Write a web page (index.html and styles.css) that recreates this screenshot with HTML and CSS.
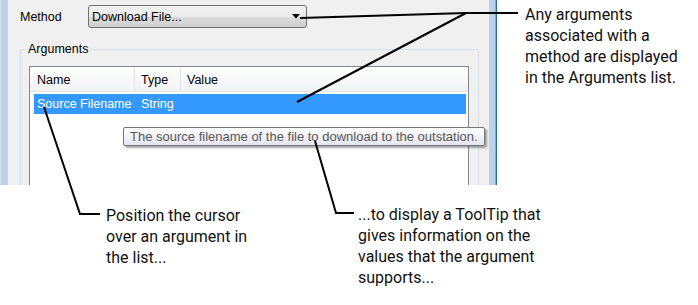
FILE: index.html
```html
<!DOCTYPE html>
<html>
<head>
<meta charset="utf-8">
<link rel="stylesheet" href="styles.css">
</head>
<body>
<div class="page">
  <div class="dialog">
    <div class="frame-l"></div>
    <div class="client">
      <div class="method-row">
        <span class="label">Method</span>
        <div class="combo">
          <span>Download File...</span>
          <svg class="arrow" width="8" height="5" viewBox="0 0 8 5"><path d="M0 0H8L4 4.5Z" fill="#000"/></svg>
        </div>
      </div>
      <fieldset class="group">
        <legend>Arguments</legend>
        <div class="list">
          <div class="list-head">
            <div class="hcell">Name</div>
            <div class="hcell">Type</div>
            <div class="hcell last">Value</div>
          </div>
          <div class="row selected">
            <div class="cell first">Source Filename</div>
            <div class="cell">String</div>
            <div class="cell"></div>
          </div>
        </div>
      </fieldset>
    </div>
    <div class="frame-r"></div>
  </div>

  <div class="tooltip">The source filename of the file to download to the outstation.</div>

  <svg class="leaders" width="698" height="305" viewBox="0 0 698 305">
    <g fill="none" stroke="#000" stroke-width="2" stroke-linejoin="miter">
      <polyline points="300,18 466,13 518,13"/>
      <line x1="466" y1="13" x2="297" y2="102"/>
      <polyline points="44,107 80,214 100,214"/>
      <polyline points="315,141 336,213 354,213"/>
    </g>
  </svg>

  <p class="note note-a">Any arguments<br>associated with a<br>method are displayed<br>in the Arguments list.</p>
  <p class="note note-b">Position the cursor<br>over an argument in<br>the list...</p>
  <p class="note note-c">...to display a ToolTip that<br>gives information on the<br>values that the argument<br>supports...</p>
</div>
</body>
</html>
```

FILE: styles.css
```css
html, body {
  margin: 0;
  padding: 0;
  background: #fff;
}

.page {
  position: relative;
  width: 698px;
  height: 305px;
  overflow: hidden;
  font-family: "Liberation Sans", Arial, sans-serif;
}

.dialog {
  display: flex;
  width: 497px;
  height: 185px;
  overflow: hidden;
}

.frame-l {
  width: 8px;
  background: #bad2eb;
  border-left: 1px solid #d6e2ee;
  box-sizing: border-box;
}

.frame-r {
  width: 8px;
  background: #bad2eb;
  box-sizing: border-box;
  border-right: 1px solid #1f6f9a;
  box-shadow: inset -1px 0 0 #4cc4f0;
}

.client {
  flex: 1;
  background: #f0f0f0;
  padding: 5px 10px 0 12px;
  font-size: 12.5px;
  color: #000;
}

.method-row {
  display: flex;
  align-items: center;
  height: 23px;
}

.label {
  width: 68px;
}

.combo {
  width: 219px;
  height: 23px;
  box-sizing: border-box;
  border: 1px solid #707070;
  border-radius: 3px;
  background: linear-gradient(#f2f2f2 0%, #ebebeb 50%, #dddddd 51%, #cfcfcf 100%);
  display: flex;
  align-items: center;
  justify-content: space-between;
  padding: 0 6px 0 3px;
}

.arrow {
  display: block;
}

.group {
  margin: 14px 0 0 0;
  padding: 9px 9px 0 8px;
  border: 1px solid #d5dfe5;
  border-radius: 3px;
  min-width: 0;
  height: 200px;
}

.group legend {
  padding: 0 2px;
  margin-left: -3px;
  font-size: 12.5px;
  line-height: 15px;
}

.list {
  border: 1px solid #828790;
  background: #fff;
  height: 200px;
}

.list-head {
  display: grid;
  grid-template-columns: 105px 46px 1fr;
  height: 24px;
  background: linear-gradient(#ffffff, #f1f2f4);
  border-bottom: 1px solid #e5e5e5;
}

.hcell {
  display: flex;
  align-items: center;
  padding-left: 7px;
  padding-top: 2px;
  border-right: 1px solid #e3e3e3;
}

.hcell + .hcell {
  padding-left: 6px;
}

.hcell.last {
  border-right: 0;
}

.row {
  display: grid;
  grid-template-columns: 101px 46px 1fr;
  height: 20px;
  margin: 2px 2px 0 4px;
}

.row.selected {
  background: #3399ff;
  color: #fff;
}

.cell {
  display: flex;
  align-items: center;
  padding-left: 6px;
  white-space: nowrap;
}

.cell.first {
  padding-left: 3px;
}

.tooltip {
  position: absolute;
  left: 123px;
  top: 127px;
  width: 362px;
  height: 19px;
  box-sizing: border-box;
  border: 1px solid #767676;
  border-radius: 2px;
  background: linear-gradient(#ffffff, #e4e5f0);
  box-shadow: 2px 2px 2px rgba(0, 0, 0, 0.35);
  color: #575757;
  font-size: 13px;
  line-height: 17px;
  padding: 0 6px;
  white-space: nowrap;
}

.leaders {
  position: absolute;
  left: 0;
  top: 0;
  pointer-events: none;
}

.note {
  position: absolute;
  margin: 0;
  font-family: Roboto, "Liberation Sans", sans-serif;
  font-size: 16px;
  line-height: 21px;
  color: #111;
  white-space: nowrap;
}

.note-a {
  left: 525px;
  top: 4px;
}

.note-b {
  left: 106px;
  top: 205px;
}

.note-c {
  left: 358px;
  top: 204px;
}
```
